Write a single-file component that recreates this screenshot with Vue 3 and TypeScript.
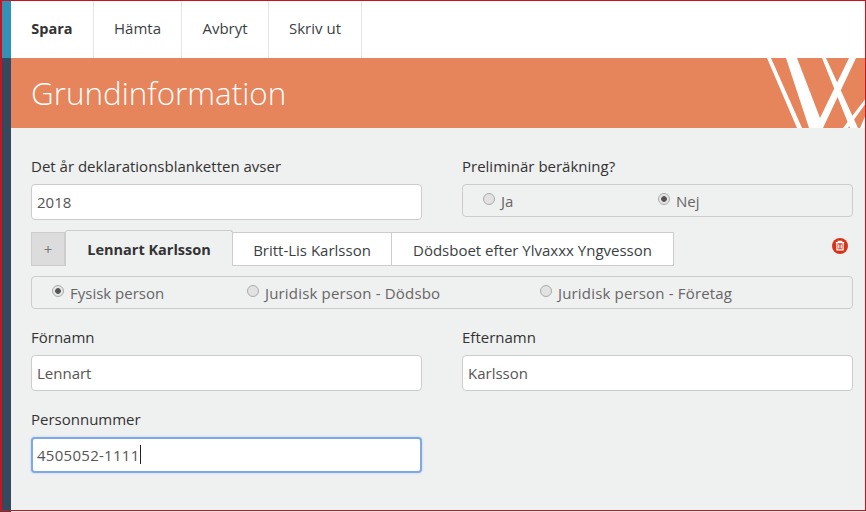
<script setup lang="ts">
const tools = ['Spara', 'Hämta', 'Avbryt', 'Skriv ut']
const tabs = ['Lennart Karlsson', 'Britt-Lis Karlsson', 'Dödsboet efter Ylvaxxx Yngvesson']
const persons = [
  { label: 'Fysisk person', on: true },
  { label: 'Juridisk person - Dödsbo', on: false },
  { label: 'Juridisk person - Företag', on: false },
]
</script>

<template>
  <div class="page">
    <aside class="side"><div class="side-top"></div></aside>
    <div class="main">
      <nav class="toolbar">
        <a v-for="(t, i) in tools" :key="t" class="tool" :class="{ first: i === 0 }">{{ t }}</a>
      </nav>
      <header class="banner">
        <h1>Grundinformation</h1>
        <svg class="logo" width="99" height="70" viewBox="0 0 99 70">
          <path d="M0 0h4L35 70h-5z" fill="#fff"/>
          <path d="M19 0h11L53 60 82 0h7L56 70H42z" fill="#fff"/>
          <path d="M55 0h4L91 70h-8z" fill="#fff"/>
          <path d="M99 40v5L81 70h-5z" fill="#fff"/>
          <path d="M99 56v14h-6z" fill="#fff"/>
        </svg>
      </header>
      <section class="content">
        <div class="grid">
          <div class="field">
            <label>Det år deklarationsblanketten avser</label>
            <div class="input">2018</div>
          </div>
          <div class="field">
            <label>Preliminär beräkning?</label>
            <div class="radios two">
              <span class="radio"><i class="dot"></i>Ja</span>
              <span class="radio"><i class="dot on"></i>Nej</span>
            </div>
          </div>
        </div>
        <div class="tabs">
          <span class="plus">+</span>
          <span v-for="(t, i) in tabs" :key="t" class="tab" :class="{ active: i === 0 }">{{ t }}</span>
          <svg class="trash" width="16" height="16" viewBox="0 0 16 16">
            <circle cx="8" cy="8" r="8" fill="#d6341a"/>
            <path d="M3.8 4.7h8.4M6.3 4.5V3.4h3.4v1.1M4.9 5v6.9h6.2V5M6.8 6.4v4.2M9.2 6.4v4.2" fill="none" stroke="#fff" stroke-width="1.2"/>
          </svg>
        </div>
        <div class="radios three">
          <span v-for="p in persons" :key="p.label" class="radio"><i class="dot" :class="{ on: p.on }"></i>{{ p.label }}</span>
        </div>
        <div class="grid names">
          <div class="field">
            <label>Förnamn</label>
            <div class="input">Lennart</div>
          </div>
          <div class="field">
            <label>Efternamn</label>
            <div class="input">Karlsson</div>
          </div>
        </div>
        <div class="grid pnr">
          <div class="field">
            <label>Personnummer</label>
            <div class="input focus">4505052-1111<b class="caret"></b></div>
          </div>
        </div>
      </section>
    </div>
    <div class="frame"></div>
  </div>
</template>

<style>
html, body { margin: 0; overflow: hidden; }
</style>

<style scoped>
.page {
  position: relative;
  display: flex;
  width: 866px;
  height: 512px;
  overflow: hidden;
  font-family: "Open Sans", "Noto Sans", sans-serif;
  font-size: 15px;
  color: #333;
  background: #fff;
}
.frame {
  position: absolute;
  inset: 0 0 1px 0;
  border: 1px solid #c8141e;
  border-left-width: 2px;
  pointer-events: none;
}
.side { width: 11px; flex: none; background: #34495e; }
.side-top { height: 58px; background: #3391b5; }
.main { flex: 1; display: flex; flex-direction: column; min-width: 0; }
.toolbar { height: 58px; display: flex; background: #fff; flex: none; }
.tool {
  display: flex;
  align-items: center;
  justify-content: center;
  border-right: 1px solid #e4e4e4;
  color: #3a3f44;
  padding-bottom: 2px;
  box-sizing: border-box;
}
.tool:nth-child(1) { width: 83px; font-weight: 700; color: #333; font-size: 14.5px; }
.tool:nth-child(2) { width: 88px; }
.tool:nth-child(3) { width: 87px; }
.tool:nth-child(4) { width: 93px; }
.banner {
  position: relative;
  height: 70px;
  flex: none;
  background: #e6845c;
  overflow: hidden;
  display: flex;
  align-items: center;
  padding-left: 20px;
}
h1 {
  margin: 0;
  font-size: 31.4px;
  font-weight: 300;
  color: #fff;
  line-height: 1;
}
.logo { position: absolute; left: 756px; top: 0; }
.content {
  flex: 1;
  background: #eff0f0;
  padding: 29px 13px 0 20px;
}
.grid { display: grid; grid-template-columns: 391px 391px; column-gap: 40px; }
.field label { display: block; height: 19px; line-height: 19px; margin-bottom: 8px; color: #333; }
.input {
  height: 36px;
  box-sizing: border-box;
  border: 1px solid #ccc;
  border-radius: 4px;
  background: #fff;
  padding: 0 5px 1px;
  color: #555;
  display: flex;
  align-items: center;
}
.focus {
  border: 2px solid #7fa8e4;
  padding-left: 4px;
  letter-spacing: 0.28px;
  box-shadow: 0 0 2px #a9c5f0;
}
.caret { display: inline-block; width: 1px; height: 19px; background: #222; }
.radios {
  height: 33px;
  box-sizing: border-box;
  border: 1px solid #ccc;
  border-radius: 4px;
  display: flex;
  align-items: center;
  color: #666;
  padding-top: 1px;
}
.two { padding-left: 20px; }
.two .radio:first-child { width: 175px; }
.three { margin-top: 10px; padding-left: 20px; width: 822px; }
.three .radio:nth-child(1) { width: 195px; }
.three .radio:nth-child(2) { width: 293px; }
.three .radio:nth-child(n + 2) { letter-spacing: 0.17px; }
.radio { display: flex; align-items: center; }
.dot {
  width: 12px;
  height: 12px;
  box-sizing: border-box;
  margin: -5px 6px 0 0;
  border-radius: 50%;
  border: 1px solid #aaa;
  background: #e2e2e2;
  flex: none;
  position: relative;
}
.dot.on { background: radial-gradient(circle, #555 0 2.5px, #e6e6e6 3.2px); }
.tabs {
  position: relative;
  display: flex;
  align-items: flex-end;
  height: 36px;
  margin-top: 10px;
}
.plus {
  width: 34px;
  height: 34px;
  box-sizing: border-box;
  background: #dcdcdc;
  border: 1px solid #ccc;
  color: #777;
  display: flex;
  align-items: center;
  justify-content: center;
}
.tab {
  height: 34px;
  box-sizing: border-box;
  background: #fff;
  border: 1px solid #ccc;
  border-left: 0;
  padding-top: 1px;
  display: flex;
  align-items: center;
  justify-content: center;
  color: #3a3f44;
}
.tab:nth-of-type(2) { width: 168px; }
.tab:nth-of-type(3) { width: 159px; }
.tab:nth-of-type(4) { width: 282px; }
.tab.active {
  height: 36px;
  background: #eff0f0;
  border-left: 1px solid #ccc;
  border-bottom: 0;
  border-radius: 3px 3px 0 0;
  font-weight: 700;
  font-size: 14.5px;
  color: #333;
}
.trash { position: absolute; right: 5px; top: 8px; }
.names { margin-top: 19px; }
.pnr { margin-top: 19px; }
</style>
